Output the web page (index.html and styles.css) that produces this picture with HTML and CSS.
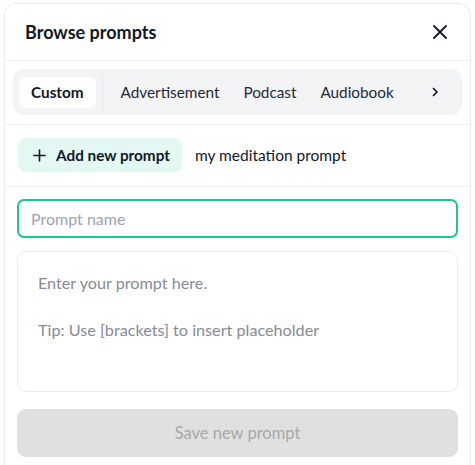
FILE: index.html
```html
<!DOCTYPE html>
<html>
<head>
<meta charset="utf-8">
<link rel="stylesheet" href="styles.css">
</head>
<body>
<div class="panel">
  <div class="header">
    <h1 class="title">Browse prompts</h1>
    <button class="close" aria-label="Close">
      <svg width="16" height="16" viewBox="0 0 16 16"><path d="M2 2L14 14M14 2L2 14" stroke="#111827" stroke-width="1.8" stroke-linecap="round"/></svg>
    </button>
  </div>
  <div class="tabs-wrap">
    <div class="tabs">
      <span class="tab active">Custom</span>
      <span class="divider"></span>
      <span class="tab">Advertisement</span>
      <span class="tab">Podcast</span>
      <span class="tab">Audiobook</span>
      <span class="chev">
        <svg width="10" height="10" viewBox="0 0 10 10"><path d="M3.5 1.5L7 5L3.5 8.5" stroke="#111827" stroke-width="1.7" fill="none" stroke-linecap="round" stroke-linejoin="round"/></svg>
      </span>
    </div>
  </div>
  <div class="prompts">
    <button class="add">
      <svg width="13" height="13" viewBox="0 0 13 13"><path d="M6.5 1V12M1 6.5H12" stroke="#111827" stroke-width="1.6" stroke-linecap="round"/></svg>
      <span>Add new prompt</span>
    </button>
    <button class="saved">my meditation prompt</button>
  </div>
  <div class="form">
    <input class="name" type="text" placeholder="Prompt name">
    <div class="body">
      <p class="ph">Enter your prompt here.</p>
      <p class="ph">Tip: Use [brackets] to insert placeholder</p>
    </div>
    <button class="save">Save new prompt</button>
  </div>
</div>
</body>
</html>
```
FILE: styles.css
```css
* { box-sizing: border-box; }
html, body { margin: 0; padding: 0; background: #fff; }
body {
  font-family: Lato, "Noto Sans", sans-serif;
  color: #111827;
  padding: 3px 0 0 4px;
}
.panel {
  width: 467px;
  border: 1px solid #ececec;
  border-bottom: none;
  border-radius: 12px 12px 0 0;
  background: #fff;
}
.header {
  height: 57px;
  display: flex;
  align-items: center;
  justify-content: space-between;
  padding: 0 22px 0 20px;
  border-bottom: 1px solid #efefef;
}
.title {
  margin: 0;
  font-size: 18px;
  font-weight: 700;
}
.close {
  border: none;
  background: none;
  padding: 0;
  display: flex;
}
.tabs-wrap {
  padding: 8px 8px 9px;
  border-bottom: 1px solid #efefef;
}
.tabs {
  height: 46px;
  background: #f3f4f6;
  border-radius: 10px;
  display: flex;
  align-items: center;
  padding: 0 6px;
  font-size: 15.3px;
  font-weight: 400;
}
.tab {
  padding: 0 12px;
  height: 31px;
  line-height: 30px;
  white-space: nowrap;
  color: #1f2937;
}
.tab.active {
  background: #fff;
  border-radius: 8px;
  color: #111827;
  font-weight: 700;
  padding: 0 12px;
}
.divider {
  width: 1px;
  height: 35px;
  background: #e5e7eb;
  margin: 0 6px;
}
.chev {
  margin-left: auto;
  margin-right: 16px;
  display: flex;
}
.prompts {
  padding: 13px 13px 14px;
  display: flex;
  align-items: center;
  border-bottom: 1px solid #efefef;
}
.add {
  height: 34px;
  border: none;
  border-radius: 8px;
  background: #e3f8f2;
  display: flex;
  align-items: center;
  gap: 10px;
  padding: 0 12px 0 15px;
  font-family: inherit;
  font-size: 15.3px;
  font-weight: 700;
  color: #111827;
}
.saved {
  height: 34px;
  border: none;
  background: none;
  padding: 0 13px;
  font-family: inherit;
  font-size: 15.5px;
  font-weight: 400;
  color: #111827;
}
.form {
  padding: 12px;
  display: flex;
  flex-direction: column;
}
.name {
  height: 39px;
  border: 2px solid #1ec38e;
  border-radius: 7px;
  padding: 0 12px 1px;
  font-family: inherit;
  font-size: 16px;
  outline: none;
}
.name::placeholder { color: #9ca3af; }
.body {
  margin-top: 13px;
  height: 141px;
  border: 1px solid #ececec;
  border-radius: 9px;
  padding: 19px 20px;
}
.ph {
  margin: 0 0 24px;
  font-size: 16.2px;
  line-height: 23px;
  color: #868b95;
}
.save {
  margin-top: 17px;
  height: 48px;
  border: none;
  border-radius: 9px;
  background: #e0e0e0;
  color: #a8a8a8;
  font-family: inherit;
  font-size: 16.5px;
  font-weight: 400;
}
```
